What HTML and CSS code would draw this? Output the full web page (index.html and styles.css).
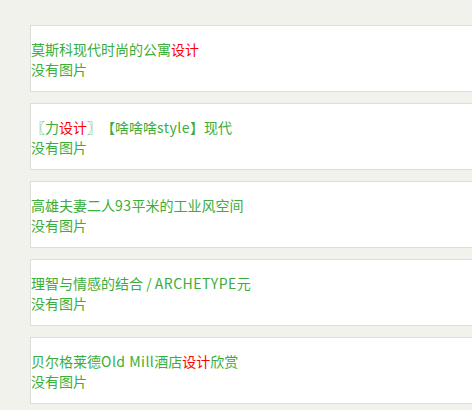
FILE: index.html
```html
<!DOCTYPE html>
<html lang="zh-CN">
<head>
<meta charset="utf-8">
<title>列表</title>
<link rel="stylesheet" href="styles.css">
</head>
<body>
<ul class="list">
  <li class="card">
    <a class="title" href="#">莫斯科现代时尚的公寓<em class="hl">设计</em></a>
    <div class="noimg">没有图片</div>
  </li>
  <li class="card">
    <a class="title" href="#">〖力<em class="hl">设计</em>〗【啥啥啥<span class="en">style</span>】现代</a>
    <div class="noimg">没有图片</div>
  </li>
  <li class="card">
    <a class="title" href="#">高雄夫妻二人<span class="en">93</span>平米的工业风空间</a>
    <div class="noimg">没有图片</div>
  </li>
  <li class="card">
    <a class="title" href="#">理智与情感的结合 / <span class="en">ARCHETYPE</span>元</a>
    <div class="noimg">没有图片</div>
  </li>
  <li class="card">
    <a class="title" href="#">贝尔格莱德<span class="en">Old Mill</span>酒店<em class="hl">设计</em>欣赏</a>
    <div class="noimg">没有图片</div>
  </li>
</ul>
</body>
</html>
```

FILE: styles.css
```css
html, body {
  margin: 0;
  padding: 0;
}
body {
  background: #f2f2ed;
  font-family: "Noto Sans CJK SC", "Noto Sans", sans-serif;
  font-size: 14px;
  line-height: 20px;
  color: #3aad3a;
  overflow: hidden;
  text-spacing-trim: space-all;
}
.list {
  list-style: none;
  margin: 0;
  padding: 25px 0 0 30px;
  display: flex;
  flex-direction: column;
  gap: 11px;
}
.card {
  background: #fff;
  border: 1px solid #dddddd;
  border-right: none;
  padding: 13px 0 12px 0;
  width: 460px;
}
.title {
  display: block;
  color: #3aad3a;
  text-decoration: none;
}
.en {
  letter-spacing: 0.5px;
}
.hl {
  font-style: normal;
  color: #ff0000;
}
.noimg {
  color: #3aad3a;
}
```
